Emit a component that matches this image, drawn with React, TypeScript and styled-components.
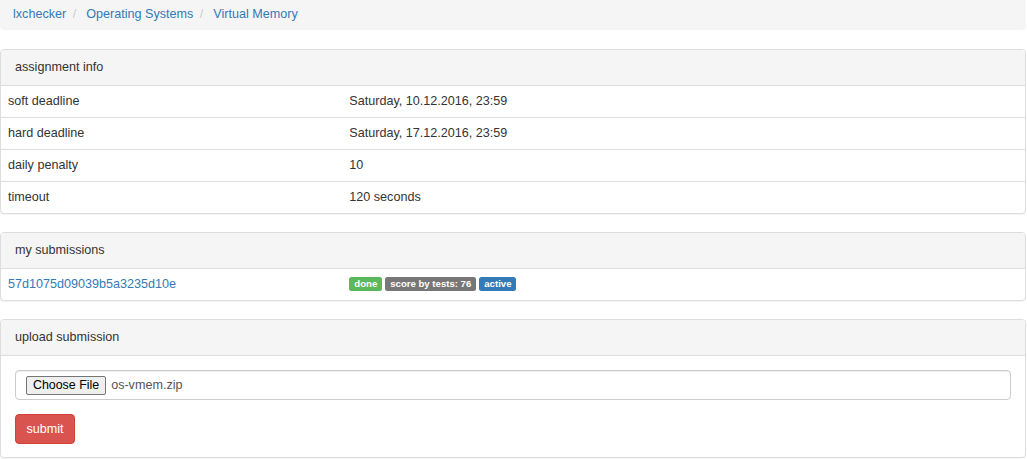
import styled, { createGlobalStyle } from 'styled-components';

const GlobalStyle = createGlobalStyle`
  body {
    margin: 0;
    font-family: "Liberation Sans", Helvetica, Arial, sans-serif;
    font-size: 12.6px;
    line-height: 19px;
    color: #333;
    background: #fff;
  }
  a {
    color: #337ab7;
    text-decoration: none;
  }
`;

interface LabelProps {
  kind: 'success' | 'default' | 'primary';
}

const labelColors = {
  success: '#5cb85c',
  default: '#777',
  primary: '#337ab7',
};

const Page = styled.div`
  width: 1026px;
`;

const Breadcrumb = styled.ol`
  list-style: none;
  margin: 0 0 19px;
  padding: 5px 13px 6px;
  background-color: #f5f5f5;
  border-radius: 0 0 4px 4px;
`;

const Crumb = styled.li`
  display: inline-block;

  & + &:before {
    content: "/\\00a0";
    padding: 0 6.5px;
    color: #ccc;
  }
`;

const Panel = styled.div`
  border: 1px solid #ddd;
  border-radius: 4px;
  margin-bottom: 18px;
  box-shadow: 0 1px 1px rgba(0, 0, 0, 0.05);
  background: #fff;
`;

const PanelHeading = styled.div`
  padding: 8px 14px;
  background-color: #f5f5f5;
  border-bottom: 1px solid #ddd;
  border-radius: 3px 3px 0 0;
`;

const PanelBody = styled.div`
  padding: 14px 14px 13px;
`;

const Table = styled.table`
  width: 100%;
  border-collapse: collapse;
`;

const Row = styled.tr`
  & + & td {
    border-top: 1px solid #ddd;
  }
`;

const Cell = styled.td`
  width: 33.33%;
  padding: 6px 7px;
  vertical-align: middle;

  & + & {
    width: auto;
  }
`;

const Label = styled.span<LabelProps>`
  display: inline-block;
  margin-right: 3px;
  padding: 2px 5px;
  font-size: 9.6px;
  line-height: 10px;
  font-weight: bold;
  color: #fff;
  border-radius: 2.5px;
  vertical-align: 1px;
  background-color: ${(props) => labelColors[props.kind]};
`;

const FormGroup = styled.div`
  margin-bottom: 14px;
`;

const FileControl = styled.label`
  display: flex;
  align-items: center;
  gap: 5px;
  height: 30px;
  box-sizing: border-box;
  padding: 0 10px;
  border: 1px solid #ccc;
  border-radius: 4px;
  box-shadow: inset 0 1px 1px rgba(0, 0, 0, 0.075);
  color: #555;
`;

const FileButton = styled.span`
  display: inline-block;
  box-sizing: border-box;
  height: 19px;
  padding: 0 6px;
  font-size: 12.4px;
  line-height: 17px;
  color: #000;
  background-color: #efefef;
  border: 1px solid #767676;
  border-radius: 2px;
`;

const HiddenInput = styled.input`
  display: none;
`;

const DangerButton = styled.button`
  display: block;
  height: 30px;
  padding: 0 10.5px;
  font-family: inherit;
  font-size: 12.6px;
  color: #fff;
  background-color: #d9534f;
  border: 1px solid #d43f3a;
  border-radius: 4px;
  cursor: pointer;
`;

const info = [
  { name: 'soft deadline', value: 'Saturday, 10.12.2016, 23:59' },
  { name: 'hard deadline', value: 'Saturday, 17.12.2016, 23:59' },
  { name: 'daily penalty', value: '10' },
  { name: 'timeout', value: '120 seconds' },
];

function App() {
  return (
    <Page>
      <GlobalStyle />
      <Breadcrumb>
        <Crumb><a href="#">lxchecker</a></Crumb>
        <Crumb><a href="#">Operating Systems</a></Crumb>
        <Crumb><a href="#">Virtual Memory</a></Crumb>
      </Breadcrumb>

      <Panel>
        <PanelHeading>assignment info</PanelHeading>
        <Table>
          <tbody>
            {info.map((item) => (
              <Row key={item.name}>
                <Cell>{item.name}</Cell>
                <Cell>{item.value}</Cell>
              </Row>
            ))}
          </tbody>
        </Table>
      </Panel>

      <Panel>
        <PanelHeading>my submissions</PanelHeading>
        <Table>
          <tbody>
            <Row>
              <Cell><a href="#">57d1075d09039b5a3235d10e</a></Cell>
              <Cell>
                <Label kind="success">done</Label>
                <Label kind="default">score by tests: 76</Label>
                <Label kind="primary">active</Label>
              </Cell>
            </Row>
          </tbody>
        </Table>
      </Panel>

      <Panel>
        <PanelHeading>upload submission</PanelHeading>
        <PanelBody>
          <FormGroup>
            <FileControl>
              <HiddenInput type="file" />
              <FileButton>Choose File</FileButton>
              <span>os-vmem.zip</span>
            </FileControl>
          </FormGroup>
          <DangerButton type="button">submit</DangerButton>
        </PanelBody>
      </Panel>
    </Page>
  );
}

export default App;
